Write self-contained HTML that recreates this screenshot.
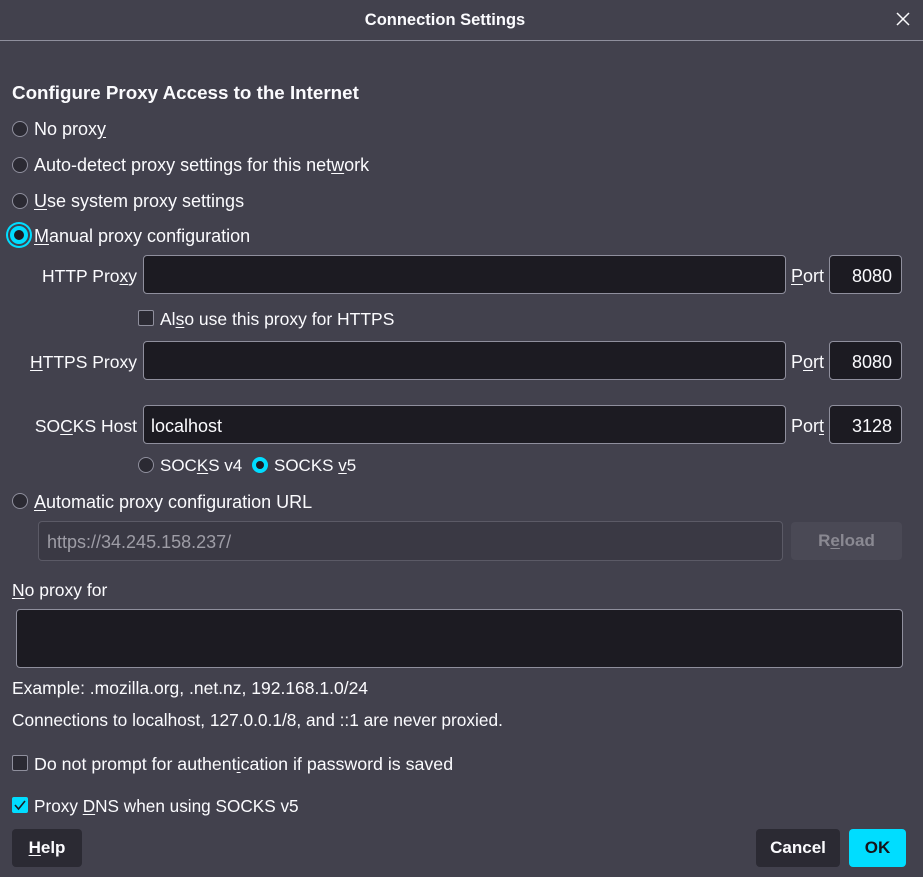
<!DOCTYPE html>
<html><head><meta charset="utf-8"><style>
*{box-sizing:border-box;margin:0;padding:0}
body{width:923px;height:877px;background:#42414d;color:#fbfbfe;font-family:"Liberation Sans",sans-serif;font-size:18px;position:relative;overflow:hidden}
.a{position:absolute;white-space:nowrap;line-height:20px}
u{text-decoration:underline;text-underline-offset:2px}
.inp{position:absolute;background:#1c1b22;border:1px solid #8f8f9d;border-radius:4px}
.r{position:absolute;width:16px;height:16px;border-radius:50%;background:#2b2a33;border:1px solid #8f8f9d}
.rs{position:absolute;width:18px;height:18px;border-radius:50%;background:#1c1b22;border:4px solid #00ddff;box-shadow:0 0 0 2px #42414d,0 0 0 4px #00ddff}
.cb{position:absolute;width:16px;height:16px;border-radius:2px;background:#2b2a33;border:1px solid #8f8f9d}
.btn{position:absolute;border-radius:4px;text-align:center;font-weight:bold;line-height:38px;font-size:17px}
.s{font-size:17.5px}
</style></head><body>
<div class="a" style="left:0;width:890px;top:10px;text-align:center;font-weight:bold;font-size:16.5px">Connection Settings</div>
<svg style="position:absolute;left:896px;top:12px" width="14" height="14"><path d="M1 1L13 13M13 1L1 13" stroke="#fbfbfe" stroke-width="1.5"/></svg>
<div style="position:absolute;left:0;top:40px;width:923px;height:1px;background:#8f8f9d"></div>

<div class="a" style="left:12px;top:83px;font-weight:bold;font-size:18.8px">Configure Proxy Access to the Internet</div>

<div class="r" style="left:12px;top:121px"></div><div class="a" style="left:34px;top:119px">No prox<u>y</u></div>
<div class="r" style="left:12px;top:157px"></div><div class="a" style="left:34px;top:155px">Auto-detect proxy settings for this net<u>w</u>ork</div>
<div class="r" style="left:12px;top:193px"></div><div class="a" style="left:34px;top:191px"><u>U</u>se system proxy settings</div>
<div class="rs" style="left:10px;top:226px"></div><div class="a" style="left:34px;top:226px"><u>M</u>anual proxy configuration</div>

<div class="a" style="left:0;width:137px;text-align:right;top:266px;font-size:17.5px">HTTP Pro<u>x</u>y</div>
<div class="inp" style="left:143px;top:255px;width:643px;height:39px"></div>
<div class="a" style="left:791px;top:266px"><u>P</u>ort</div>
<div class="inp" style="left:829px;top:255px;width:73px;height:39px"></div>
<div class="a" style="left:829px;width:63px;text-align:right;top:266px">8080</div>

<div class="cb" style="left:138px;top:310px"></div><div class="a" style="left:160px;top:309px;font-size:17.5px">Al<u>s</u>o use this proxy for HTTPS</div>

<div class="a" style="left:0;width:137px;text-align:right;top:352px;font-size:17.5px"><u>H</u>TTPS Proxy</div>
<div class="inp" style="left:143px;top:341px;width:643px;height:39px"></div>
<div class="a" style="left:791px;top:352px">P<u>o</u>rt</div>
<div class="inp" style="left:829px;top:341px;width:73px;height:39px"></div>
<div class="a" style="left:829px;width:63px;text-align:right;top:352px">8080</div>

<div class="a" style="left:0;width:137px;text-align:right;top:416px;font-size:17.5px">SO<u>C</u>KS Host</div>
<div class="inp" style="left:143px;top:405px;width:643px;height:39px"></div>
<div class="a" style="left:151px;top:416px">localhost</div>
<div class="a" style="left:791px;top:416px">Por<u>t</u></div>
<div class="inp" style="left:829px;top:405px;width:73px;height:39px"></div>
<div class="a" style="left:829px;width:63px;text-align:right;top:416px">3128</div>

<div class="r" style="left:138px;top:457px"></div><div class="a" style="left:160px;top:456px;font-size:17px">SOC<u>K</u>S v4</div>
<div class="rs" style="left:252px;top:457px;width:16px;height:16px;box-shadow:none;border-width:4px"></div><div class="a" style="left:274px;top:456px;font-size:17px">SOCKS <u>v</u>5</div>

<div class="r" style="left:12px;top:493px"></div><div class="a" style="left:34px;top:492px"><u>A</u>utomatic proxy configuration URL</div>
<div class="inp" style="left:38px;top:521px;width:745px;height:40px;background:#3a3944;border-color:#5b5a66"></div>
<div class="a" style="left:47px;top:532px;color:#9e9da6">https://34.245.158.237/</div>
<div class="btn" style="left:791px;top:522px;width:111px;height:38px;background:#4a4955;color:#8a8992;line-height:38px">R<u>e</u>load</div>

<div class="a s" style="left:12px;top:580px"><u>N</u>o proxy for</div>
<div class="inp" style="left:16px;top:609px;width:887px;height:59px"></div>
<div class="a s" style="left:12px;top:678px">Example: .mozilla.org, .net.nz, 192.168.1.0/24</div>
<div class="a" style="left:12px;top:710px;font-size:17.3px">Connections to localhost, 127.0.0.1/8, and ::1 are never proxied.</div>

<div class="cb" style="left:12px;top:755px"></div><div class="a" style="left:34px;top:754px;font-size:17.8px">Do not prompt for authent<u>i</u>cation if password is saved</div>
<div class="cb" style="left:12px;top:797px;background:#00ddff;border-color:#00ddff"></div>
<svg style="position:absolute;left:13px;top:798px" width="14" height="14"><path d="M2 7L5.5 11L12 3" stroke="#1c1b22" stroke-width="1.6" fill="none"/></svg>
<div class="a" style="left:34px;top:796px;font-size:17.2px">Proxy <u>D</u>NS when using SOCKS v5</div>

<div class="btn" style="left:12px;top:829px;width:70px;height:38px;background:#2b2a33"><u>H</u>elp</div>
<div class="btn" style="left:756px;top:829px;width:84px;height:38px;background:#2b2a33">Cancel</div>
<div class="btn" style="left:849px;top:829px;width:57px;height:38px;background:#00ddff;color:#15141a">OK</div>
</body></html>
